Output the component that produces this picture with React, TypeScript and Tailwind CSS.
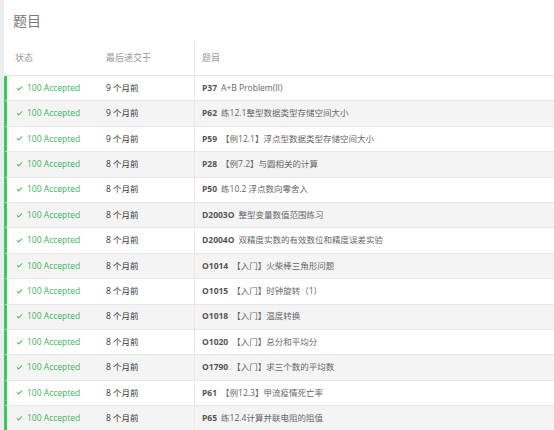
import { Check } from 'lucide-react';

interface Record {
  id: string;
  title: string;
  time: string;
}

const records: Record[] = [
  { id: 'P37', title: 'A+B Problem(II)', time: '9 个月前' },
  { id: 'P62', title: '练12.1整型数据类型存储空间大小', time: '9 个月前' },
  { id: 'P59', title: '【例12.1】浮点型数据类型存储空间大小', time: '9 个月前' },
  { id: 'P28', title: '【例7.2】与圆相关的计算', time: '8 个月前' },
  { id: 'P50', title: '练10.2 浮点数向零舍入', time: '8 个月前' },
  { id: 'D2003O', title: '整型变量数值范围练习', time: '8 个月前' },
  { id: 'D2004O', title: '双精度实数的有效数位和精度误差实验', time: '8 个月前' },
  { id: 'O1014', title: '【入门】火柴棒三角形问题', time: '8 个月前' },
  { id: 'O1015', title: '【入门】时钟旋转（1）', time: '8 个月前' },
  { id: 'O1018', title: '【入门】温度转换', time: '8 个月前' },
  { id: 'O1020', title: '【入门】总分和平均分', time: '8 个月前' },
  { id: 'O1790', title: '【入门】求三个数的平均数', time: '8 个月前' },
  { id: 'P61', title: '【例12.3】甲流疫情死亡率', time: '8 个月前' },
  { id: 'P65', title: '练12.4计算并联电阻的阻值', time: '8 个月前' },
];

const font = "font-['Open_Sans','Noto_Sans_CJK_SC',sans-serif]";

const App = () => {
  return (
    <div className={`flex h-[430px] overflow-hidden bg-[#e9edf0] pl-[4px] ${font}`}>
      <div className="flex-1 bg-white">
        {/* Title */}
        <div className="flex h-[41px] items-center pl-[9px]">
          <h1 className="text-[14px] font-normal text-[#777]">题目</h1>
        </div>

        {/* Header */}
        <div className="grid h-[35px] grid-cols-[89px_98px_1fr] border-b border-[#e3e3e3] border-l-[3px] border-l-transparent text-[9px] text-[#999]">
          <div className="flex items-center pl-[8px]">状态</div>
          <div className="flex items-center pl-[10px]">最后递交于</div>
          <div className="flex items-center border-l border-[#e8e8e8] pl-[7px]">题目</div>
        </div>

        {/* Rows */}
        {records.map((r, i) => (
          <div
            key={r.id}
            className={`grid h-[25.4px] grid-cols-[89px_98px_1fr] border-b border-[#e8e8e8] border-l-[3px] border-l-[#3cc85a] text-[8.5px] ${
              i % 2 === 1 ? 'bg-[#f4f4f4]' : 'bg-white'
            }`}
          >
            <div className="flex items-center gap-[4px] pl-[9px] text-[#3bb45a]">
              <Check className="h-[7px] w-[7px]" strokeWidth={3.5} />
              <span>100 Accepted</span>
            </div>
            <div className="flex items-center pl-[10px] text-[#333]">{r.time}</div>
            <div className="flex items-center border-l border-[#e8e8e8] pl-[7px]">
              <span className="mr-[4px] font-bold text-[#555]">{r.id}</span>
              <span className="text-[#666]">{r.title}</span>
            </div>
          </div>
        ))}
      </div>
    </div>
  );
};

export default App;
